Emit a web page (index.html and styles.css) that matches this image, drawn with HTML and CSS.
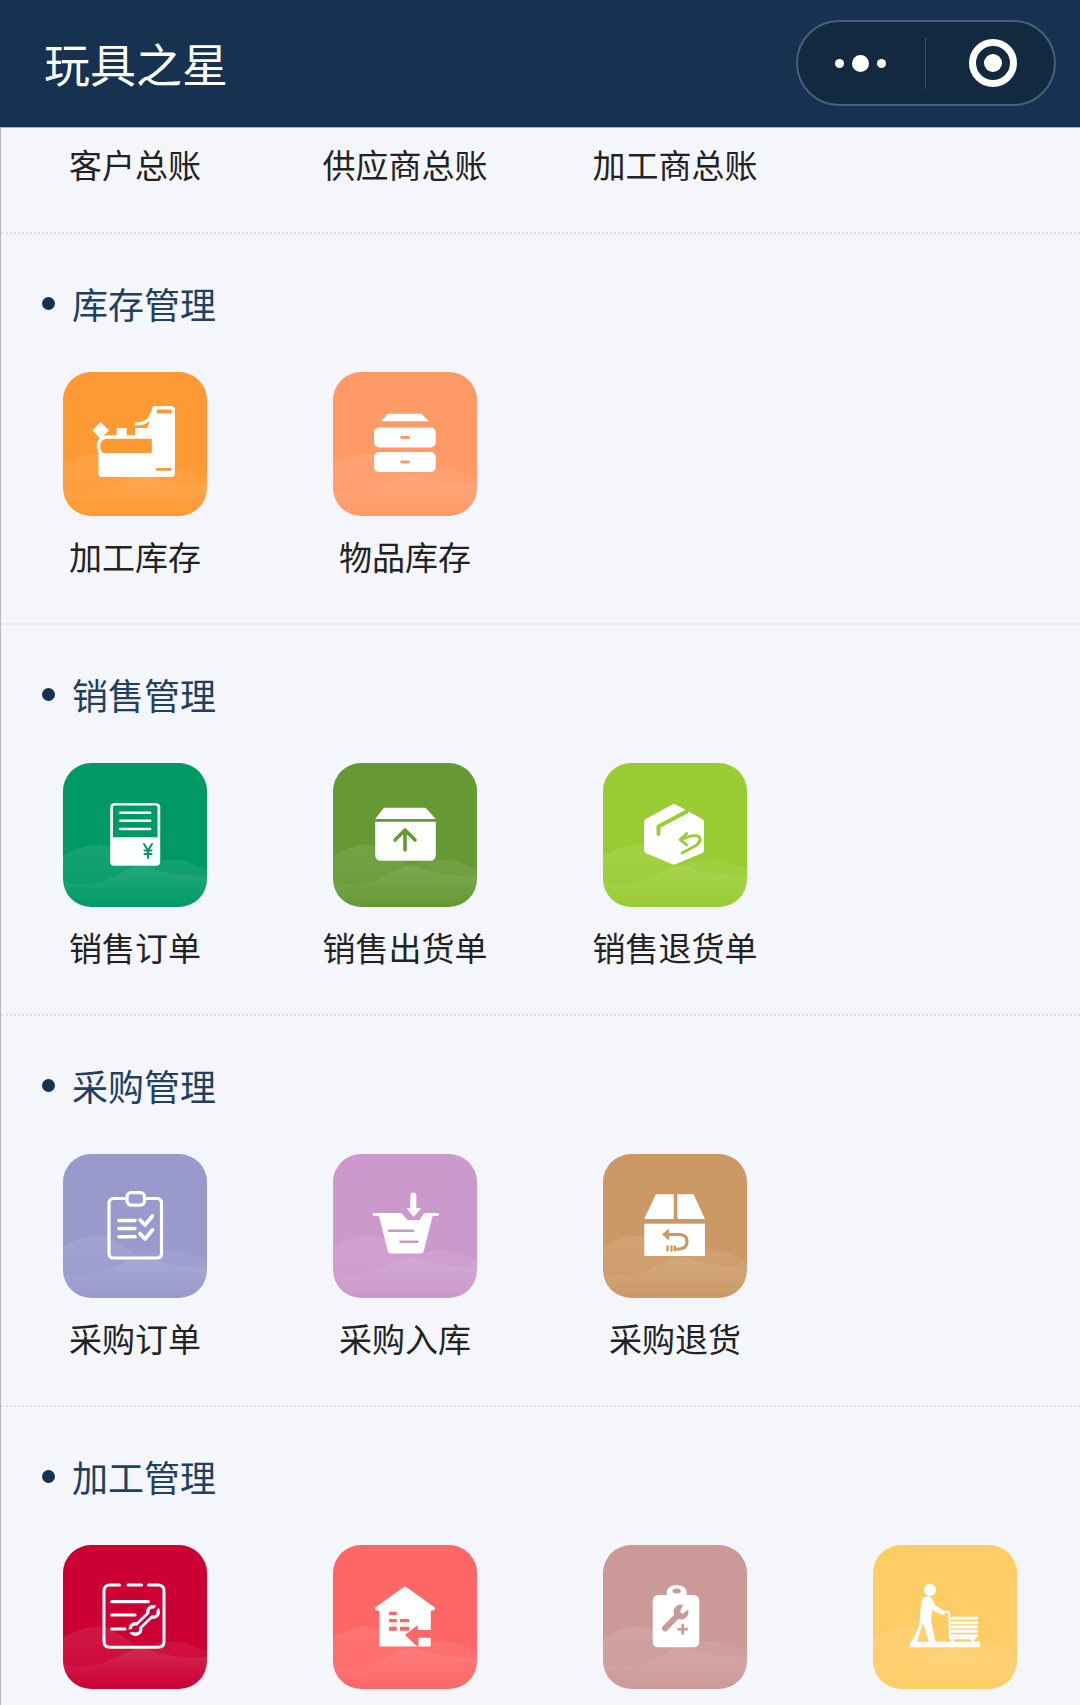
FILE: index.html
```html
<!DOCTYPE html>
<html lang="zh-CN">
<head>
<meta charset="utf-8">
<title>玩具之星</title>
<link rel="stylesheet" href="styles.css">
</head>
<body>
<svg class="defs" width="0" height="0" aria-hidden="true">
  <defs>
    <linearGradient id="fade" gradientUnits="userSpaceOnUse" x1="0" y1="82" x2="0" y2="144">
      <stop offset="0" stop-color="#fff" stop-opacity=".09"/>
      <stop offset=".55" stop-color="#fff" stop-opacity=".05"/>
      <stop offset="1" stop-color="#fff" stop-opacity="0"/>
    </linearGradient>
    <linearGradient id="fade2" gradientUnits="userSpaceOnUse" x1="0" y1="100" x2="0" y2="144">
      <stop offset="0" stop-color="#fff" stop-opacity=".09"/>
      <stop offset="1" stop-color="#fff" stop-opacity="0"/>
    </linearGradient>
    <g id="waves">
      <path fill="url(#fade)" d="M0 93C12 86 26 81 38 82C54 84 62 94 76 102C90 98 100 96 115 97C125 98 135 103 144 106V144H0Z"/>
      <path fill="url(#fade2)" d="M0 119C10 122 25 122 40 118C58 112 70 100 85 104C100 110 120 114 144 112V144H0Z"/>
    </g>
  </defs>
</svg>

<header class="nav">
  <h1 class="nav-title">玩具之星</h1>
  <div class="capsule">
    <div class="capsule-dots"><i class="dot-sm"></i><i class="dot-lg"></i><i class="dot-sm"></i></div>
    <i class="capsule-line"></i>
    <div class="capsule-ring"></div>
  </div>
</header>

<main class="page">
  <section class="section section-first">
    <div class="grid">
      <div class="item"><span class="label">客户总账</span></div>
      <div class="item"><span class="label">供应商总账</span></div>
      <div class="item"><span class="label">加工商总账</span></div>
    </div>
  </section>

  <section class="section">
    <h2 class="heading">库存管理</h2>
    <div class="grid">
      <div class="item">
        <svg class="tile c-orange" viewBox="0 0 144 144"><use href="#waves"/>
          <path class="w" d="M92 34H108Q112 34 112 38V101Q112 105 108 105H39Q35.500 105 35.500 101V81H88.700V63H82V56H84Q87 50 88.700 38Q89 34 92 34Z"/>
          <path class="w" d="M53.700 56H63.700V65H53.700ZM72 56H82V65H72ZM37.500 50L46 58.500L37.500 67L29.500 58.500Z"/>
          <path class="ln" stroke-width="3" d="M73 52Q86 52 89 41"/>
          <path class="ln" stroke-width="3.400" d="M88.700 65H45Q35.500 65.500 35.500 74Q35.500 79 38 81"/>
          <rect class="cut" x="93.700" y="37.500" width="15" height="4" rx="1"/>
          <rect class="cut" x="93" y="96" width="15.500" height="2.800" rx="1"/>
          <rect class="cut" x="38" y="67" width="50.700" height="14" rx="6"/>
        </svg>
        <span class="label">加工库存</span>
      </div>
      <div class="item">
        <svg class="tile c-peach" viewBox="0 0 144 144"><use href="#waves"/>
          <path class="w" d="M55 41.700H88.300L96 49.300H48Z"/>
          <rect class="w" x="41" y="55.400" width="61.700" height="20" rx="5"/>
          <rect class="w" x="41" y="80" width="61.700" height="20" rx="5"/>
          <rect class="cut" x="67.300" y="64" width="9.400" height="3" rx="1"/>
          <rect class="cut" x="67.300" y="88.500" width="9.400" height="3" rx="1"/>
        </svg>
        <span class="label">物品库存</span>
      </div>
    </div>
  </section>

  <section class="section">
    <h2 class="heading">销售管理</h2>
    <div class="grid">
      <div class="item">
        <svg class="tile c-green" viewBox="0 0 144 144"><use href="#waves"/>
          <rect class="w" x="47.200" y="40.300" width="50" height="62.400" rx="4"/>
          <path class="cut" d="M52 42.500H92.500Q94.500 42.500 94.500 44.500V74.300H50V44.500Q50 42.500 52 42.500Z"/>
          <path class="wl" stroke-width="2.400" d="M57.300 49.700H87.200M57.300 57.800H87.200M57.300 66H87.200"/>
          <path class="cl" stroke-width="2" d="M81 81L85 87.500L89 81M85 87.500V95M81.500 87.500H88.500M81.500 91H88.500"/>
        </svg>
        <span class="label">销售订单</span>
      </div>
      <div class="item">
        <svg class="tile c-olive" viewBox="0 0 144 144"><use href="#waves"/>
          <path class="w" d="M52 44.700H91.500Q93 44.700 94 46.200L102.800 56H42.200L49.700 46.200Q50.500 44.700 52 44.700Z"/>
          <path class="w" d="M42.200 58.700H102.800V91.700Q102.800 97.700 96.800 97.700H48.200Q42.200 97.700 42.200 91.700Z"/>
          <path class="cl" stroke-width="3.600" d="M72 87V68M62 77L72 67L82 77"/>
        </svg>
        <span class="label">销售出货单</span>
      </div>
      <div class="item">
        <svg class="tile c-lime" viewBox="0 0 144 144"><use href="#waves"/>
          <path class="w" stroke="#fff" stroke-width="7" stroke-linejoin="round" d="M71 44.500L97.500 59V87L71 98L44.500 87V59Z"/>
          <path class="cl" stroke-width="4" stroke-linecap="butt" d="M83.700 48.500L55.500 63.500V71"/>
          <path class="cl" stroke-width="2.800" d="M79 76.500C86 73 96 70 97 76C97.500 82 88 85 79 90"/>
          <path class="cl" stroke-width="2.800" d="M83.700 70.500L77 76.700L83.700 82"/>
        </svg>
        <span class="label">销售退货单</span>
      </div>
    </div>
  </section>

  <section class="section">
    <h2 class="heading">采购管理</h2>
    <div class="grid">
      <div class="item">
        <svg class="tile c-lavender" viewBox="0 0 144 144"><use href="#waves"/>
          <path class="wl" stroke-width="3.200" d="M61 44.500H51Q46 44.500 46 49.500V99.500Q46 104 51 104H94Q98.500 104 98.500 99.500V49.500Q98.500 44.500 94 44.500H84"/>
          <rect class="wl" stroke-width="3.200" x="64" y="38.700" width="17.500" height="12.400" rx="4"/>
          <path class="wl" stroke-width="3.600" d="M56 66.500H72M56 74.500H72M56 82.700H72"/>
          <path class="wl" stroke-width="3.600" d="M77 66L82 71L89.500 62M77 79.500L82 85L89.500 76"/>
        </svg>
        <span class="label">采购订单</span>
      </div>
      <div class="item">
        <svg class="tile c-pink" viewBox="0 0 144 144"><use href="#waves"/>
          <path class="w" d="M77.300 41Q77.300 38.500 80.300 38.500Q83.300 38.500 83.300 41V54.300H88L80.700 63L73.400 54.300H77.300Z"/>
          <path class="w" d="M41 59H67.500Q69 59 70 61L74.500 66H86.500L90 60.500Q91 59 92.500 59H104.500Q106 59 106 60.500Q106 62 104.500 62H99.600L91 96Q90.500 99.500 87 99.500H58Q55 99.500 54.500 96L46 62H41Q39.500 62 39.500 60.500Q39.500 59 41 59Z"/>
          <path class="cl" stroke-width="2.400" d="M56 76.700H80M67.400 87.700H84.400"/>
        </svg>
        <span class="label">采购入库</span>
      </div>
      <div class="item">
        <svg class="tile c-tan" viewBox="0 0 144 144"><use href="#waves"/>
          <path class="w" d="M52.800 40.300H70.700V65H41.300ZM74.400 40.300H90.500L102 65H74.400Z"/>
          <rect class="w" x="41.300" y="69.700" width="60.700" height="32.300"/>
          <path class="cl" stroke-width="3.200" d="M62 80.500H77Q84 81 84 87.500Q84 94 77 95H74"/>
          <path class="cut" d="M66 74.500V86.500L59 80.500Z"/>
          <path class="cl" stroke-width="2.400" d="M64.500 92.500V96.500M68.500 92.500V96.500M71.800 92.500V96.500"/>
        </svg>
        <span class="label">采购退货</span>
      </div>
    </div>
  </section>

  <section class="section section-last">
    <h2 class="heading">加工管理</h2>
    <div class="grid">
      <div class="item">
        <svg class="tile c-crimson" viewBox="0 0 144 144"><use href="#waves"/>
          <path class="wl" stroke-width="3" d="M56.500 40H47Q41 40 41 46V96.300Q41 102.300 47 102.300H95Q101 102.300 101 96.300V46Q101 40 95 40H85.500M65 40H78.500"/>
          <path class="wl" stroke-width="3.200" d="M48.700 56.700H85.300M48.700 70H72M48.700 84H62"/>
          <path class="wl" stroke-width="8" d="M75 81.500L87.500 69.500"/>
          <circle class="w" cx="72.500" cy="84" r="7"/>
          <circle class="w" cx="90" cy="67" r="7"/>
          <path class="cl" stroke-width="2.600" d="M75 81.500L87.500 69.500"/>
          <circle class="cut" cx="72.500" cy="84" r="3.600"/>
          <circle class="cut" cx="90" cy="67" r="3.600"/>
          <path class="cl" stroke-width="3" stroke-linecap="butt" d="M71.500 85L66 86M91 66L96 60"/>
        </svg>
      </div>
      <div class="item">
        <svg class="tile c-red" viewBox="0 0 144 144"><use href="#waves"/>
          <path class="w" stroke="#fff" stroke-width="3" stroke-linejoin="round" d="M72 43L100.500 63.500L96.300 65V100H47.700V65L43.500 63.500Z"/>
          <path class="cut" d="M56 66.700H63.700V70H56ZM56 74H63.700V77.300H56ZM67 74H76V77.300H67ZM56 81.700H63.700V85.700H56ZM67 81.700H76V85.700H67Z"/>
          <path class="cut" d="M72 90L84.700 80V85H98V92.700H85.500V101.700H84.500Z"/>
        </svg>
      </div>
      <div class="item">
        <svg class="tile c-dusty" viewBox="0 0 144 144"><use href="#waves"/>
          <path class="w" d="M64 50Q62 41 73.700 40Q85 41 83.500 50H90.300Q96.300 50 96.300 56V96.300Q96.300 102.300 90.300 102.300H55.700Q49.700 102.300 49.700 96.300V56Q49.700 50 55.700 50Z"/>
          <ellipse class="cut" cx="73.700" cy="46" rx="4.200" ry="2.500"/>
          <path class="cl" stroke-width="6" d="M62 83.300L76 69"/>
          <circle class="cut" cx="78" cy="67" r="7.500"/>
          <path class="w" d="M77 66.500L81 58L87 63L79.500 69Z"/>
          <path class="cl" stroke-width="2.600" d="M79.700 80V88.600M75.400 84.300H84"/>
        </svg>
      </div>
      <div class="item">
        <svg class="tile c-yellow" viewBox="0 0 144 144"><use href="#waves"/>
          <circle class="w" cx="57" cy="45" r="6"/>
          <path class="w" d="M50 53Q53 50 58 52L62 60L71 66L72 69L69 70L59 65L58 76L62.500 97H56L50 78L44 97H38.500Q46 84 47 74Q47 60 50 53Z"/>
          <rect class="w" x="37" y="96.700" width="70" height="5.600"/>
          <path class="wl" stroke-width="2" d="M70.300 67Q76 66 76.300 69L77 93.300H102"/>
          <path class="wl" stroke-width="3" stroke-linecap="butt" d="M78.700 73.300H103.700M78.700 77.700H103.700M78.700 82H103.700M78.700 86.300H103.700M78.700 90.700H103.700"/>
          <circle class="w" cx="79.300" cy="95" r="2"/>
          <circle class="w" cx="99.700" cy="95" r="2"/>
        </svg>
      </div>
    </div>
  </section>
</main>
</body>
</html>
```

FILE: styles.css
```css
* { box-sizing: border-box; }

html, body {
  margin: 0;
  padding: 0;
  height: 1705px;
  overflow: hidden;
  background: #f4f6fb;
  font-family: "Noto Sans CJK SC", "Noto Sans", sans-serif;
}

.defs { display: block; height: 0; }

.nav {
  height: 128px;
  padding: 20px 24px 0 44px;
  display: flex;
  justify-content: space-between;
  align-items: flex-start;
  background: #163250;
  border-bottom: 1px solid #9fb0c0;
}

.nav-title {
  margin: 0;
  font-size: 46px;
  line-height: 84px;
  font-weight: 400;
  color: #fff;
}

.capsule {
  width: 260px;
  height: 86px;
  display: flex;
  align-items: center;
  background: #12293f;
  border: 2px solid #49607a;
  border-radius: 43px;
}

.capsule-dots {
  flex: 0 0 127px;
  display: flex;
  justify-content: center;
  align-items: center;
  gap: 8px;
  padding-right: 2px;
}

.dot-sm, .dot-lg {
  display: block;
  background: #fff;
  border-radius: 50%;
}
.dot-sm { width: 9px; height: 9px; }
.dot-lg { width: 17px; height: 17px; }

.capsule-line {
  display: block;
  width: 1px;
  height: 51px;
  background: #3a5068;
}

.capsule-ring {
  width: 48px;
  height: 48px;
  margin-left: 43px;
  border: 7px solid #fff;
  border-radius: 50%;
  position: relative;
}
.capsule-ring::after {
  content: "";
  position: absolute;
  left: 8px;
  top: 8px;
  width: 18px;
  height: 18px;
  border-radius: 50%;
  background: #fff;
}

.page { border-left: 1px solid #b8b8bc; }

.section {
  padding: 44px 0 46px;
  border-bottom: 2px dotted #dfe0e4;
}
.section-first { padding: 15px 0 47px; }
.section-last { border-bottom: 0; }

.heading {
  position: relative;
  margin: 0 0 44px;
  padding-left: 71px;
  font-size: 36px;
  line-height: 50px;
  font-weight: 400;
  color: #1f4064;
}
.heading::before {
  content: "";
  position: absolute;
  left: 41px;
  top: 19px;
  width: 13px;
  height: 13px;
  border-radius: 50%;
  background: #163250;
}

.grid {
  display: grid;
  grid-template-columns: repeat(4, 270px);
  margin-left: -1px;
}

.item {
  display: flex;
  flex-direction: column;
  align-items: center;
}

.tile {
  display: block;
  width: 144px;
  height: 144px;
  border-radius: 28px;
  margin-bottom: 19px;
}

.label {
  font-size: 33px;
  line-height: 42px;
  color: #222;
  white-space: nowrap;
}

.w { fill: #fff; }
.cut { fill: currentColor; }
.ln, .wl { fill: none; stroke: #fff; stroke-linecap: round; stroke-linejoin: round; }
.cl { fill: none; stroke: currentColor; stroke-linecap: round; stroke-linejoin: round; }

.c-orange { background: #ff9933; color: #ff9933; }
.c-peach { background: #ff9966; color: #ff9966; }
.c-green { background: #009966; color: #009966; }
.c-olive { background: #669933; color: #669933; }
.c-lime { background: #99cc33; color: #99cc33; }
.c-lavender { background: #9999cc; color: #9999cc; }
.c-pink { background: #cc99cc; color: #cc99cc; }
.c-tan { background: #cc9966; color: #cc9966; }
.c-crimson { background: #cc0033; color: #cc0033; }
.c-red { background: #ff6666; color: #ff6666; }
.c-dusty { background: #cc9999; color: #cc9999; }
.c-yellow { background: #ffcc66; color: #ffcc66; }
```
